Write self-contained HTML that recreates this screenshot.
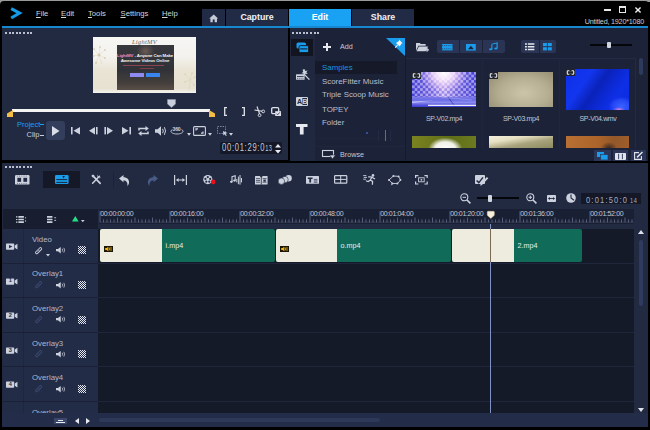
<!DOCTYPE html><html><head><meta charset="utf-8"><title>Video Editor</title><style>
*{margin:0;padding:0;box-sizing:border-box}
html,body{width:650px;height:430px;overflow:hidden;background:#000}
body{position:relative;font-family:"Liberation Sans",sans-serif;color:#c9cedb;font-size:8px}
.a{position:absolute}
.t{position:absolute;white-space:nowrap;line-height:1}
svg{position:absolute;overflow:visible}
</style></head><body><div class="a" style="left:0px;top:0px;width:650px;height:430px;background:#9a9a9a;"></div><div class="a" style="left:0px;top:1px;width:649px;height:428px;background:#000;border-radius:4px 4px 0 0"></div><div class="a" style="left:2px;top:26.2px;width:646px;height:1.6px;background:#1787cf;"></div><svg preserveAspectRatio="none" style="left:10px;top:7px" width="13" height="13" viewBox="0 0 13 13"><path d="M1.2 1.6 L9.6 6.1 L1.2 11" stroke="#159ae8" stroke-width="3" fill="none" stroke-linejoin="miter"/></svg><div class="t" style="left:36px;top:9.5px;font-size:7.7px;color:#d6d6d6;"><u>F</u>ile</div><div class="t" style="left:61px;top:9.5px;font-size:7.7px;color:#d6d6d6;"><u>E</u>dit</div><div class="t" style="left:88px;top:9.5px;font-size:7.7px;color:#d6d6d6;"><u>T</u>ools</div><div class="t" style="left:120.5px;top:9.5px;font-size:7.7px;color:#d6d6d6;"><u>S</u>ettings</div><div class="t" style="left:162px;top:9.5px;font-size:7.7px;color:#d6d6d6;"><u>H</u>elp</div><div class="a" style="left:202px;top:9px;width:23px;height:17px;background:#222b45;"></div><div class="a" style="left:226px;top:9px;width:62px;height:17px;background:#222b45;"></div><div class="a" style="left:289px;top:9px;width:62px;height:17px;background:#19a2f3;"></div><div class="a" style="left:352px;top:9px;width:62px;height:17px;background:#222b45;"></div><svg preserveAspectRatio="none" style="left:208.8px;top:13.6px" width="9.4" height="8.6" viewBox="0 0 12 11"><path d="M6 0.5 L0.3 5.6 L1.8 5.6 L1.8 10.5 L4.8 10.5 L4.8 7 L7.2 7 L7.2 10.5 L10.2 10.5 L10.2 5.6 L11.7 5.6 Z" fill="#c6cad6"/></svg><div class="t" style="left:226px;top:12.6px;font-size:8.8px;color:#f0f2f6;width:62px;text-align:center;font-weight:bold">Capture</div><div class="t" style="left:289px;top:12.6px;font-size:8.8px;color:#ffffff;width:62px;text-align:center;font-weight:bold">Edit</div><div class="t" style="left:352px;top:12.6px;font-size:8.8px;color:#f0f2f6;width:62px;text-align:center;font-weight:bold">Share</div><div class="a" style="left:604px;top:8.5px;width:6.6px;height:2px;background:#e8e8e8;"></div><div class="a" style="left:618.6px;top:6px;width:7.6px;height:7px;background:transparent;border:1px solid #e8e8e8;border-top-width:2px"></div><svg preserveAspectRatio="none" style="left:635.2px;top:6.6px" width="6" height="6" viewBox="0 0 7 7"><path d="M0.5 0.5 L6.5 6.5 M6.5 0.5 L0.5 6.5" stroke="#f0f0f0" stroke-width="1.6"/></svg><div class="t" style="left:584px;top:17.8px;font-size:7.2px;color:#d0d0d0;width:60px;text-align:right;letter-spacing:-0.2px">Untitled, 1920*1080</div><div class="a" style="left:2px;top:28px;width:286px;height:132px;background:#222a41;"></div><div class="a" style="left:5.0px;top:32px;width:2px;height:2px;background:#b9bfd0;"></div><div class="a" style="left:8.6px;top:32px;width:2px;height:2px;background:#b9bfd0;"></div><div class="a" style="left:12.2px;top:32px;width:2px;height:2px;background:#b9bfd0;"></div><div class="a" style="left:15.8px;top:32px;width:2px;height:2px;background:#b9bfd0;"></div><div class="a" style="left:19.4px;top:32px;width:2px;height:2px;background:#b9bfd0;"></div><div class="a" style="left:23.0px;top:32px;width:2px;height:2px;background:#b9bfd0;"></div><div class="a" style="left:26.6px;top:32px;width:2px;height:2px;background:#b9bfd0;"></div><div class="a" style="left:30.2px;top:32px;width:2px;height:2px;background:#b9bfd0;"></div><div class="a" style="left:93px;top:37px;width:103px;height:56px;background:#efece2;background:linear-gradient(180deg,#f6f6f4 0%,#f3f2ee 35%,#e9e4d4 60%,#e6e1d0 92%,#f4f3ef 100%)"></div><svg preserveAspectRatio="none" style="left:93px;top:46px" width="14" height="20" viewBox="0 0 14 20"><g stroke="#cdb98a" stroke-width="0.5" opacity=".45"><path d="M6 9 L1 3 M6 9 L7 1 M6 9 L12 4 M6 9 L0 10 M6 9 L12 12 M6 9 L3 17 M6 9 L9 18"/></g><g fill="#c8b07a" opacity=".5"><circle cx="1" cy="3" r="0.9"/><circle cx="7" cy="1" r="0.9"/><circle cx="12" cy="4" r="0.9"/><circle cx="0.5" cy="10" r="0.9"/><circle cx="12" cy="12" r="0.9"/><circle cx="3" cy="17" r="0.9"/><circle cx="6" cy="9" r="1.4"/></g></svg><svg preserveAspectRatio="none" style="left:184px;top:72px" width="12" height="20" viewBox="0 0 12 20"><g stroke="#cfc4a4" stroke-width="0.5" opacity=".5"><path d="M6 8 L1 2 M6 8 L8 1 M6 8 L11 5 M6 8 L1 10 M6 8 L5 19 M6 8 L10 13"/></g><g fill="#cbbd96" opacity=".5"><circle cx="1" cy="2" r="0.8"/><circle cx="8" cy="1" r="0.8"/><circle cx="11" cy="5" r="0.8"/><circle cx="1" cy="10" r="0.8"/><circle cx="10" cy="13" r="0.8"/></g></svg><div class="a" style="left:116.5px;top:45px;width:57px;height:44.5px;background:#33353b;background:radial-gradient(ellipse 9px 8px at 50% 14%,#6a5a52 0%,rgba(60,56,58,0) 100%),linear-gradient(180deg,#36383e 0%,#303238 55%,#453f3c 85%,#5a4f48 100%)"></div><div class="t" style="left:93px;top:38.5px;font-size:6.5px;color:#6d675c;width:103px;text-align:center;font-family:'Liberation Serif',serif;font-style:italic;letter-spacing:0.3px">LightMV</div><div class="t" style="left:116.5px;top:53.8px;font-size:4.4px;color:#f4f4f4;width:57px;text-align:center;font-weight:bold;letter-spacing:-0.1px"><span style="color:#e88fc9">LightMV</span> - Anyone Can Make</div><div class="t" style="left:116.5px;top:58.6px;font-size:4.4px;color:#f4f4f4;width:57px;text-align:center;font-weight:bold;letter-spacing:-0.1px">Awesome Videos Online</div><div class="a" style="left:123px;top:64.8px;width:41px;height:0.8px;background:#b04a5a;opacity:.7"></div><div class="a" style="left:139.6px;top:67.6px;width:14px;height:0.7px;background:#a04454;opacity:.7"></div><div class="a" style="left:130px;top:73.3px;width:14px;height:3.7px;background:#8d8af0;"></div><div class="a" style="left:145.5px;top:73.3px;width:14px;height:3.7px;background:#3a84f0;"></div><div class="a" style="left:12px;top:108.5px;width:198px;height:3px;background:#f4f4f4;"></div><svg preserveAspectRatio="none" style="left:7px;top:109.5px" width="6" height="7" viewBox="0 0 6 7"><path d="M6 0 L6 7 L0 7 L0 3.6 Z" fill="#f2bc45"/></svg><svg preserveAspectRatio="none" style="left:209px;top:109.5px" width="6" height="7" viewBox="0 0 6 7"><path d="M0 0 L0 7 L6 7 L6 3.6 Z" fill="#f2bc45"/></svg><svg preserveAspectRatio="none" style="left:167px;top:99px" width="9" height="9" viewBox="0 0 9 9"><path d="M0.5 0.5 H8.5 V5 L4.5 8.5 L0.5 5 Z" fill="#c9cfdd" stroke="#8e96ad" stroke-width="0.6"/></svg><svg preserveAspectRatio="none" style="left:224px;top:107px" width="3" height="9" viewBox="0 0 3 9"><path d="M3 0.6 H0.7 V8.4 H3" stroke="#e0e3ea" stroke-width="1.3" fill="none"/></svg><svg preserveAspectRatio="none" style="left:242px;top:107px" width="3" height="9" viewBox="0 0 3 9"><path d="M0 0.6 H2.3 V8.4 H0" stroke="#e0e3ea" stroke-width="1.3" fill="none"/></svg><svg preserveAspectRatio="none" style="left:254px;top:106px" width="11" height="11" viewBox="0 0 11 11"><path d="M3 0.5 L5.6 8 M0.5 4 L8.2 5.2" stroke="#dfe2ea" stroke-width="1.1" fill="none"/><circle cx="9.2" cy="5.4" r="1.4" fill="none" stroke="#dfe2ea" stroke-width="0.9"/><circle cx="5.6" cy="9.2" r="1.4" fill="none" stroke="#dfe2ea" stroke-width="0.9"/></svg><svg preserveAspectRatio="none" style="left:271px;top:107px" width="10" height="9" viewBox="0 0 10 9"><rect x="0.7" y="0.7" width="7" height="6" rx="1.2" fill="none" stroke="#dfe2ea" stroke-width="1.3"/><rect x="4.2" y="4.2" width="5.8" height="4.8" fill="#dfe2ea"/><path d="M5.4 6.6 L6.6 7.8 L8.8 5.4" stroke="#222a41" stroke-width="0.8" fill="none"/></svg><div class="t" style="left:17px;top:120.5px;font-size:7.5px;color:#1aa0f0;">Project</div><div class="a" style="left:40px;top:124px;width:4px;height:1px;background:#1aa0f0;"></div><div class="t" style="left:26.5px;top:131.3px;font-size:7.5px;color:#c9cedb;">Clip</div><div class="a" style="left:40px;top:135px;width:4px;height:1px;background:#c9cedb;"></div><div class="a" style="left:46px;top:121px;width:18.5px;height:18.5px;background:#333d5c;border-radius:3px"></div><svg preserveAspectRatio="none" style="left:52px;top:125.5px" width="7.5" height="10" viewBox="0 0 8 10"><path d="M0 0 L8 5 L0 10 Z" fill="#d9dde8"/></svg><svg preserveAspectRatio="none" style="left:71px;top:127.3px" width="9" height="7.4" viewBox="0 0 9 8"><rect x="0" y="0" width="1.6" height="8" fill="#ccd1de"/><path d="M9 0 L2.5 4 L9 8 Z" fill="#ccd1de"/></svg><svg preserveAspectRatio="none" style="left:88.5px;top:127.3px" width="9" height="7.4" viewBox="0 0 9 8"><path d="M6 0 L0 4 L6 8 Z" fill="#ccd1de"/><rect x="7" y="0" width="1.6" height="8" fill="#ccd1de"/></svg><svg preserveAspectRatio="none" style="left:104px;top:127.3px" width="9" height="7.4" viewBox="0 0 9 8"><rect x="0.4" y="0" width="1.6" height="8" fill="#ccd1de"/><path d="M3 0 L9 4 L3 8 Z" fill="#ccd1de"/></svg><svg preserveAspectRatio="none" style="left:122px;top:127.3px" width="9" height="7.4" viewBox="0 0 9 8"><path d="M0 0 L6.5 4 L0 8 Z" fill="#ccd1de"/><rect x="7.4" y="0" width="1.6" height="8" fill="#ccd1de"/></svg><svg preserveAspectRatio="none" style="left:138px;top:126px" width="11" height="10" viewBox="0 0 11 10"><path d="M1 4.5 V2.5 H8 M10 5.5 V7.5 H3" stroke="#ccd1de" stroke-width="1.5" fill="none"/><path d="M7.5 0 L10.8 2.5 L7.5 5 Z M3.5 5 L0.2 7.5 L3.5 10 Z" fill="#ccd1de"/></svg><svg preserveAspectRatio="none" style="left:154.5px;top:126px" width="12" height="10" viewBox="0 0 12 10"><path d="M0 3.2 H2.6 L6 0.3 V9.7 L2.6 6.8 H0 Z" fill="#ccd1de"/><path d="M7.6 2.8 Q9 5 7.6 7.2 M9.4 1.2 Q11.6 5 9.4 8.8" stroke="#ccd1de" stroke-width="1" fill="none"/></svg><div class="t" style="left:172.5px;top:126.5px;font-size:5.2px;color:#ccd1de;font-weight:bold;letter-spacing:-0.2px">360</div><svg preserveAspectRatio="none" style="left:170px;top:128px" width="14" height="7" viewBox="0 0 14 7"><path d="M2.4 1.6 C-0.6 3 1.4 6 7 6 C12.6 6 14.6 3 11.6 1.6" fill="none" stroke="#ccd1de" stroke-width="0.9"/></svg><svg preserveAspectRatio="none" style="left:186.5px;top:132.5px" width="4" height="2.8" viewBox="0 0 5 3"><path d="M0 0 H5 L2.5 3 Z" fill="#ccd1de"/></svg><svg preserveAspectRatio="none" style="left:193px;top:126px" width="13" height="10" viewBox="0 0 13 10"><rect x="0.6" y="0.6" width="11.8" height="8.8" rx="1" fill="none" stroke="#ccd1de" stroke-width="1.1"/><path d="M3 4.4 V2.8 H5 M10 5.6 V7.2 H8" stroke="#ccd1de" stroke-width="1.2" fill="none"/></svg><svg preserveAspectRatio="none" style="left:207.5px;top:132.5px" width="4" height="2.8" viewBox="0 0 5 3"><path d="M0 0 H5 L2.5 3 Z" fill="#ccd1de"/></svg><svg preserveAspectRatio="none" style="left:217px;top:126px" width="11" height="10" viewBox="0 0 11 10"><rect x="0.5" y="0.5" width="8" height="7" fill="none" stroke="#7781a0" stroke-width="1" stroke-dasharray="1.5 1"/><path d="M6 5 L10.5 7 L8.6 7.8 L9.8 9.6 L8.8 10 L7.8 8.2 L6.4 9.4 Z" fill="#ccd1de"/></svg><svg preserveAspectRatio="none" style="left:229px;top:132.5px" width="4" height="2.8" viewBox="0 0 5 3"><path d="M0 0 H5 L2.5 3 Z" fill="#ccd1de"/></svg><div class="a" style="left:219.5px;top:142px;width:62.5px;height:11.5px;background:#141827;border-radius:2px"></div><div class="t" style="left:221.5px;top:142.4px;font-size:11.5px;color:#c8cddb;letter-spacing:1.1px;transform:scaleX(0.66);transform-origin:0 0">00:01:29:0<span style="font-size:8.5px;letter-spacing:0.6px">13</span></div><svg preserveAspectRatio="none" style="left:275px;top:143.5px" width="6" height="10" viewBox="0 0 6 10"><path d="M0 3.6 L3 0 L6 3.6 Z M0 6 L3 9.6 L6 6 Z" fill="#e8ebf2"/></svg><div class="a" style="left:290px;top:28px;width:358px;height:133px;background:#1c2339;"></div><div class="a" style="left:290px;top:28px;width:25px;height:133px;background:#202840;"></div><div class="a" style="left:292.0px;top:32px;width:2px;height:2px;background:#b9bfd0;"></div><div class="a" style="left:295.6px;top:32px;width:2px;height:2px;background:#b9bfd0;"></div><div class="a" style="left:299.2px;top:32px;width:2px;height:2px;background:#b9bfd0;"></div><div class="a" style="left:302.8px;top:32px;width:2px;height:2px;background:#b9bfd0;"></div><div class="a" style="left:306.4px;top:32px;width:2px;height:2px;background:#b9bfd0;"></div><div class="a" style="left:310.0px;top:32px;width:2px;height:2px;background:#b9bfd0;"></div><div class="a" style="left:313.6px;top:32px;width:2px;height:2px;background:#b9bfd0;"></div><div class="a" style="left:317.2px;top:32px;width:2px;height:2px;background:#b9bfd0;"></div><div class="a" style="left:291px;top:39px;width:22px;height:17px;background:#12151f;"></div><svg preserveAspectRatio="none" style="left:295.5px;top:42px" width="13" height="11" viewBox="0 0 13 11"><rect x="0.5" y="0.5" width="9.5" height="6" rx="1.6" fill="#1a9cec"/><rect x="3" y="3.6" width="9.6" height="7" rx="1.4" fill="#1a9cec" stroke="#12151f" stroke-width="0.9"/><rect x="4.2" y="6.4" width="7.2" height="1" fill="#12151f"/></svg><svg preserveAspectRatio="none" style="left:295.5px;top:69px" width="14" height="11" viewBox="0 0 14 11"><rect x="0" y="5.2" width="8.6" height="5.6" rx="0.6" fill="#ccd1de"/><path d="M1 7.6 H7.6" stroke="#202840" stroke-width="0.9"/><path d="M1 9.6 H7.6" stroke="#202840" stroke-width="0.6" stroke-dasharray="1 0.8"/><path d="M7.6 4.6 L13.4 10.6" stroke="#ccd1de" stroke-width="1.3"/><path d="M8.4 0 L9.3 2 L11.6 1.4 L10.3 3.3 L11.8 5 L9.5 4.8 L8.4 6.8 L7.6 4.6 L5.4 4.2 L7.2 3 L6.6 0.8 Z" fill="#ccd1de"/></svg><svg preserveAspectRatio="none" style="left:296px;top:97px" width="12" height="9" viewBox="0 0 12 9"><rect x="0" y="0" width="12" height="9" rx="1" fill="#ccd1de"/><rect x="6.4" y="1" width="4.6" height="7" fill="#202840"/></svg><div class="t" style="left:297px;top:98px;font-size:7px;color:#202840;font-weight:bold">A</div><div class="t" style="left:302.4px;top:98px;font-size:7px;color:#ccd1de;font-weight:bold">B</div><svg preserveAspectRatio="none" style="left:296px;top:124px" width="11.5" height="10.5" viewBox="0 0 11.5 10.5"><path d="M0 0 H11.5 V3 H7.6 V10.5 H3.9 V3 H0 Z" fill="#e6e9f0"/></svg><svg preserveAspectRatio="none" style="left:323px;top:43px" width="8" height="8" viewBox="0 0 8 8"><path d="M3 0 H5 V3 H8 V5 H5 V8 H3 V5 H0 V3 H3 Z" fill="#e6e9f0"/></svg><div class="t" style="left:340px;top:43.3px;font-size:7.2px;color:#c3c8d6;">Add</div><svg preserveAspectRatio="none" style="left:386px;top:38px" width="19" height="18" viewBox="0 0 19 18"><path d="M0 0 H19 V18 Z" fill="#1a9cec"/><path d="M13 1.6 L16.6 5.2 L15.6 5.6 L13.6 8.6 L10 5 L13 3 Z" fill="#f2f6fb"/><path d="M11.6 7 L9.2 9.6" stroke="#f2f6fb" stroke-width="1.1"/></svg><div class="a" style="left:315px;top:61px;width:82px;height:13px;background:#151928;"></div><div class="t" style="left:322px;top:63.8px;font-size:7.9px;color:#1b93df;">Samples</div><div class="t" style="left:322px;top:77.8px;font-size:7.9px;color:#b9bfd0;">ScoreFitter Music</div><div class="t" style="left:322px;top:91.2px;font-size:7.9px;color:#b9bfd0;">Triple Scoop Music</div><div class="t" style="left:322px;top:105.8px;font-size:7.9px;color:#b9bfd0;">TOPEY</div><div class="t" style="left:322px;top:119.2px;font-size:7.9px;color:#b9bfd0;">Folder</div><div class="a" style="left:315px;top:138px;width:70px;height:1px;background:#1f263c;"></div><div class="a" style="left:315px;top:146px;width:90px;height:1px;background:#20273d;"></div><div class="a" style="left:366px;top:132px;width:2px;height:2px;background:#34508f;"></div><div class="a" style="left:378px;top:130px;width:1px;height:11px;background:#222a45;"></div><div class="a" style="left:385px;top:130px;width:1px;height:11px;background:#77752a;"></div><div class="a" style="left:390px;top:130px;width:1px;height:11px;background:#222a45;"></div><svg preserveAspectRatio="none" style="left:322px;top:150px" width="14" height="9" viewBox="0 0 14 9"><rect x="0.5" y="0.5" width="11" height="6" fill="none" stroke="#ccd1de" stroke-width="1.1"/><path d="M7.5 5 H13.5 L10.5 9 Z" fill="#ccd1de" stroke="#1c2339" stroke-width="0.6"/></svg><div class="t" style="left:340px;top:150.6px;font-size:7.2px;color:#c3c8d6;">Browse</div><div class="a" style="left:405px;top:38px;width:1px;height:123px;background:#161b2c;"></div><svg preserveAspectRatio="none" style="left:415.5px;top:41.8px" width="13.5" height="10.2" viewBox="0 0 14 11"><path d="M0 1 H4 L5 2.2 H10 V4 H2.5 L0 9.5 Z" fill="#ccd1de"/><path d="M3 4.8 H12.5 L10 10 H0.5 Z" fill="#ccd1de"/><path d="M11.5 6.5 V10.5 M9.5 8.5 H13.5" stroke="#ccd1de" stroke-width="1.2"/></svg><div class="a" style="left:436.5px;top:40.2px;width:68px;height:12.8px;background:#2a3454;border-radius:2px"></div><div class="a" style="left:458.5px;top:40.2px;width:1px;height:12.8px;background:#1c2339;"></div><div class="a" style="left:481.5px;top:40.2px;width:1px;height:12.8px;background:#1c2339;"></div><svg preserveAspectRatio="none" style="left:442px;top:43.8px" width="10.5" height="6.4" viewBox="0 0 11 8"><rect x="0" y="0" width="11" height="8" fill="#1a9cec"/><path d="M0 2 H11 M0 6 H11" stroke="#2a3557" stroke-width="0.8" stroke-dasharray="1.2 1"/></svg><svg preserveAspectRatio="none" style="left:466px;top:43.5px" width="9.8" height="6.6" viewBox="0 0 10 8"><rect x="0" y="0" width="10" height="8" fill="#1a9cec"/><path d="M2 6.5 L5 2 L8 6.5 Z" fill="#1c2339"/></svg><svg preserveAspectRatio="none" style="left:489px;top:43px" width="8.6" height="7.6" viewBox="0 0 9 10"><path d="M3 1.5 L8.5 0 V7" stroke="#1a9cec" stroke-width="1.3" fill="none"/><path d="M3 1.5 V8" stroke="#1a9cec" stroke-width="1.2"/><ellipse cx="1.8" cy="8.2" rx="1.8" ry="1.4" fill="#1a9cec"/><ellipse cx="7.2" cy="7.2" rx="1.8" ry="1.4" fill="#1a9cec"/></svg><div class="a" style="left:521px;top:40.2px;width:35px;height:12.8px;background:#2a3454;border-radius:2px"></div><div class="a" style="left:538.5px;top:40.2px;width:1px;height:12.8px;background:#1c2339;"></div><svg preserveAspectRatio="none" style="left:525px;top:43.2px" width="9.4" height="7.4" viewBox="0 0 10 8"><path d="M0 1 H2 M3 1 H10 M0 4 H2 M3 4 H10 M0 7 H2 M3 7 H10" stroke="#e6e9f0" stroke-width="1.6"/></svg><svg preserveAspectRatio="none" style="left:543px;top:43.2px" width="8.8" height="7.4" viewBox="0 0 9 8"><rect x="0" y="0" width="4" height="3.4" fill="#1a9cec"/><rect x="5" y="0" width="4" height="3.4" fill="#1a9cec"/><rect x="0" y="4.6" width="4" height="3.4" fill="#1a9cec"/><rect x="5" y="4.6" width="4" height="3.4" fill="#1a9cec"/></svg><div class="a" style="left:590px;top:44.3px;width:42px;height:1.6px;background:#05060a;"></div><div class="a" style="left:607px;top:42px;width:4px;height:6px;background:#d0d4df;border-radius:1px"></div><div class="a" style="left:406px;top:58px;width:230px;height:1px;background:#232b45;"></div><div class="a" style="left:482px;top:60px;width:1px;height:88px;background:#1f263d;"></div><div class="a" style="left:558.5px;top:60px;width:1px;height:88px;background:#1f263d;"></div><div class="a" style="left:635px;top:58px;width:1px;height:90px;background:#222a44;"></div><div class="a" style="left:639px;top:58px;width:4px;height:17px;background:#2e3a5c;border-radius:2px"></div><div class="a" style="left:412.3px;top:71.5px;width:64px;height:35px;background:#5a55d8;background:radial-gradient(ellipse 24px 19px at 50% 4%,rgba(255,255,255,.98) 0%,rgba(255,235,252,.8) 40%,rgba(255,220,250,.35) 70%,rgba(255,255,255,0) 100%),repeating-conic-gradient(rgba(255,255,255,.42) 0% 25%,rgba(50,40,200,.25) 0% 50%) 0 0/5.4px 5.4px,linear-gradient(90deg,#4a46d8,#8674e6 30%,#c8b0f4 50%,#8674e6 70%,#4a46d8)"></div><div class="a" style="left:412.3px;top:97px;width:64px;height:9.5px;background:#6c6ce6;background:linear-gradient(180deg,#7c7ae8 0%,#6a6ae6 30%,#8a8aee 55%,#5656de 80%,#3a3cd0 100%)"></div><svg preserveAspectRatio="none" style="left:412.3px;top:97px" width="64" height="9.5" viewBox="0 0 64 9.5"><path d="M0 4.4 L22 3.4 L0 6 Z" fill="#d8d8fa" opacity=".7"/><path d="M36 0 L43 9.5" stroke="#2a2ca0" stroke-width="0.8" opacity=".8"/><path d="M16 8.4 H64" stroke="#f4f4ff" stroke-width="1.2" opacity=".95"/><path d="M30 0.4 L60 3" stroke="#b0b0f4" stroke-width="0.8" opacity=".6"/></svg><div class="a" style="left:489px;top:71.5px;width:64px;height:35px;background:#b5ad90;background:radial-gradient(ellipse 44px 28px at 55% 60%,#cdc5a8 0%,#b6ae92 55%,#978f74 100%)"></div><div class="a" style="left:566px;top:68.8px;width:63px;height:41.2px;background:#0c2ce6;background:radial-gradient(ellipse 6px 2.5px at 84% 99%,#d07ae6 0%,rgba(208,122,230,0) 100%),radial-gradient(ellipse 13px 10px at 88% 92%,#3a62ff 0%,#2648f6 65%,rgba(38,72,246,0) 100%),linear-gradient(125deg,#0d2ee8 0%,#1236ee 30%,#0a22b8 48%,#0b27cc 58%,#0e2fe6 75%,#0c2ce0 100%)"></div><svg preserveAspectRatio="none" style="left:412.3px;top:71.5px" width="9" height="7" viewBox="0 0 9 7"><rect x="0" y="0" width="9" height="7" fill="#20232c"/><rect x="1.3" y="1.7" width="6.4" height="3.6" rx="0.6" fill="none" stroke="#e8eaf0" stroke-width="1.1"/><rect x="3.4" y="0.8" width="2.2" height="1.6" fill="#20232c"/><rect x="3.4" y="4.6" width="2.2" height="1.6" fill="#20232c"/></svg><svg preserveAspectRatio="none" style="left:489px;top:71.5px" width="9" height="7" viewBox="0 0 9 7"><rect x="0" y="0" width="9" height="7" fill="#20232c"/><rect x="1.3" y="1.7" width="6.4" height="3.6" rx="0.6" fill="none" stroke="#e8eaf0" stroke-width="1.1"/><rect x="3.4" y="0.8" width="2.2" height="1.6" fill="#20232c"/><rect x="3.4" y="4.6" width="2.2" height="1.6" fill="#20232c"/></svg><svg preserveAspectRatio="none" style="left:566px;top:68.8px" width="9" height="7" viewBox="0 0 9 7"><rect x="0" y="0" width="9" height="7" fill="#20232c"/><rect x="1.3" y="1.7" width="6.4" height="3.6" rx="0.6" fill="none" stroke="#e8eaf0" stroke-width="1.1"/><rect x="3.4" y="0.8" width="2.2" height="1.6" fill="#20232c"/><rect x="3.4" y="4.6" width="2.2" height="1.6" fill="#20232c"/></svg><div class="t" style="left:412px;top:115px;font-size:7px;color:#c0c5d2;width:64px;text-align:center;letter-spacing:-0.35px">SP-V02.mp4</div><div class="t" style="left:489px;top:115px;font-size:7px;color:#c0c5d2;width:64px;text-align:center;letter-spacing:-0.35px">SP-V03.mp4</div><div class="t" style="left:566px;top:115px;font-size:7px;color:#c0c5d2;width:64px;text-align:center;letter-spacing:-0.35px">SP-V04.wmv</div><div class="a" style="left:412px;top:136.3px;width:64px;height:11.5px;background:#6e7a1e;background:radial-gradient(ellipse 17px 11px at 52% 105%,#fff 0%,#f0f0e6 60%,rgba(110,122,30,0) 100%),linear-gradient(90deg,#7b8220,#5f6e18 60%,#6d7a20)"></div><div class="a" style="left:489px;top:136.3px;width:64px;height:11.5px;background:#b5ad90;background:linear-gradient(170deg,#f4f1df 0%,#e6e0c2 30%,#a8a37c 60%,#8d8a60 100%)"></div><div class="a" style="left:566px;top:136.3px;width:63px;height:11.5px;background:#a0602c;background:radial-gradient(ellipse 8px 6px at 68% 100%,#3a2a20 0%,rgba(80,50,30,.5) 60%,rgba(160,96,44,0) 100%),linear-gradient(100deg,#b87034 0%,#ac642a 50%,#94582a 75%,#a05e2a 100%)"></div><div class="a" style="left:594px;top:150px;width:17px;height:11px;background:#2a3557;"></div><div class="a" style="left:613px;top:150px;width:15px;height:11px;background:#2a3557;"></div><div class="a" style="left:631px;top:150px;width:15px;height:11px;background:#2a3557;"></div><svg preserveAspectRatio="none" style="left:597px;top:152px" width="11" height="8" viewBox="0 0 11 8"><rect x="0" y="0" width="7" height="5" fill="#1a9cec"/><rect x="3.5" y="2.5" width="7.5" height="5.5" fill="#1a9cec" stroke="#2a3557" stroke-width="0.7"/></svg><svg preserveAspectRatio="none" style="left:615px;top:152.5px" width="11" height="7" viewBox="0 0 11 7"><rect x="0" y="0" width="11" height="7" rx="0.8" fill="#e1e4ec"/><path d="M3.6 0.8 V6.2 M7.4 0.8 V6.2" stroke="#2a3557" stroke-width="0.9"/></svg><svg preserveAspectRatio="none" style="left:634px;top:152px" width="9" height="8" viewBox="0 0 9 8"><path d="M5 0.6 H0.6 V7.4 H7.4 V4" stroke="#e1e4ec" stroke-width="1.1" fill="none"/><path d="M3 5.4 L8.5 0" stroke="#e1e4ec" stroke-width="1.5"/></svg><div class="a" style="left:2px;top:163px;width:646px;height:264px;background:#222a42;"></div><div class="a" style="left:5.0px;top:166px;width:2px;height:2px;background:#b9bfd0;"></div><div class="a" style="left:8.6px;top:166px;width:2px;height:2px;background:#b9bfd0;"></div><div class="a" style="left:12.2px;top:166px;width:2px;height:2px;background:#b9bfd0;"></div><div class="a" style="left:15.8px;top:166px;width:2px;height:2px;background:#b9bfd0;"></div><div class="a" style="left:19.4px;top:166px;width:2px;height:2px;background:#b9bfd0;"></div><div class="a" style="left:23.0px;top:166px;width:2px;height:2px;background:#b9bfd0;"></div><div class="a" style="left:26.6px;top:166px;width:2px;height:2px;background:#b9bfd0;"></div><div class="a" style="left:30.2px;top:166px;width:2px;height:2px;background:#b9bfd0;"></div><div class="a" style="left:43px;top:171px;width:37px;height:17px;background:#141827;"></div><svg preserveAspectRatio="none" style="left:15px;top:175px" width="14.5" height="9.6" viewBox="0 0 14.5 9.6"><rect x="0" y="0" width="14.5" height="9.6" rx="1.2" fill="#ccd1de"/><rect x="2.4" y="2.8" width="3.7" height="4" fill="#222a42"/><rect x="8.4" y="2.8" width="3.7" height="4" fill="#222a42"/><path d="M2 1.1 H13 M2 8.5 H13" stroke="#222a42" stroke-width="0.7" stroke-dasharray="0.8 1.4" opacity=".8"/></svg><svg preserveAspectRatio="none" style="left:54.8px;top:175px" width="13.6" height="9" viewBox="0 0 13.6 9"><rect x="0" y="0" width="13.6" height="9" rx="1.2" fill="#1a9cec"/><path d="M1.4 4.6 H12.2 M1.4 7.4 H12.2" stroke="#141827" stroke-width="0.9"/><path d="M7.4 1 H9.8 L8.6 3.6 Z" fill="#141827"/></svg><svg preserveAspectRatio="none" style="left:90.5px;top:174px" width="10.5" height="10.5" viewBox="0 0 10.5 10.5"><path d="M2.4 2.4 L9.2 9.4" stroke="#ccd1de" stroke-width="1.7" stroke-linecap="round"/><path d="M8.4 2.2 L1.6 9.2" stroke="#ccd1de" stroke-width="1.5" stroke-linecap="round"/><path d="M0.4 1.8 L1.8 0.4 L3.6 1.4 L1.4 3.6 Z" fill="#ccd1de"/><path d="M7 0.6 A2 2 0 1 0 10 3.4 L8.4 3.6 L7 2.2 Z" fill="#ccd1de"/></svg><div class="a" style="left:112.5px;top:172px;width:1px;height:16px;background:#1b2238;"></div><svg preserveAspectRatio="none" style="left:119px;top:175px" width="11" height="11" viewBox="0 0 11 11"><path d="M0 3.5 L4.5 0 V2.2 C8 2.2 10.5 4.5 10 8 C9.8 9.4 9 10.4 8.3 10.9 C9 8 7.5 5.4 4.5 5.2 V7.2 Z" fill="#ccd1de"/></svg><svg preserveAspectRatio="none" style="left:147px;top:175px" width="11" height="11" viewBox="0 0 11 11"><path d="M11 3.5 L6.5 0 V2.2 C3 2.2 0.5 4.5 1 8 C1.2 9.4 2 10.4 2.7 10.9 C2 8 3.5 5.4 6.5 5.2 V7.2 Z" fill="#4a5b85"/></svg><svg preserveAspectRatio="none" style="left:174px;top:175px" width="13" height="10" viewBox="0 0 13 10"><path d="M0.6 0 V10 M12.4 0 V10" stroke="#ccd1de" stroke-width="1.2"/><path d="M2.5 5 H10.5" stroke="#ccd1de" stroke-width="1"/><path d="M4.6 3 L2.2 5 L4.6 7 Z M8.4 3 L10.8 5 L8.4 7 Z" fill="#ccd1de"/></svg><svg preserveAspectRatio="none" style="left:203px;top:175px" width="13" height="10" viewBox="0 0 13 10"><circle cx="4.8" cy="4.6" r="4.6" fill="#ccd1de"/><circle cx="4.8" cy="2.1" r="1.1" fill="#222a42"/><circle cx="2.4" cy="3.9" r="1.1" fill="#222a42"/><circle cx="7.2" cy="3.9" r="1.1" fill="#222a42"/><circle cx="3.3" cy="6.7" r="1.1" fill="#222a42"/><circle cx="6.3" cy="6.7" r="1.1" fill="#222a42"/><circle cx="10.2" cy="6.9" r="2.3" fill="#e8101c"/></svg><svg preserveAspectRatio="none" style="left:230px;top:175px" width="12" height="9.6" viewBox="0 0 12 9.6"><path d="M2 6.6 V1.6 L5.2 0.8 V5.4" stroke="#ccd1de" stroke-width="1.1" fill="none"/><ellipse cx="1.4" cy="6.8" rx="1.4" ry="1.1" fill="#ccd1de"/><ellipse cx="4.5" cy="5.6" rx="1.4" ry="1.1" fill="#ccd1de"/><path d="M6.8 4 V7.4 M8.4 1.6 V9.2 M10 0 V9.6 M11.5 3 V7.4" stroke="#ccd1de" stroke-width="1"/></svg><svg preserveAspectRatio="none" style="left:255px;top:175.6px" width="12.6" height="8.6" viewBox="0 0 12.6 8.6"><rect x="0" y="0" width="12.6" height="8.6" rx="0.6" fill="#ccd1de"/><path d="M6.3 0 V8.6" stroke="#222a42" stroke-width="0.8"/><path d="M1 2.6 H5 M1 4.4 H5 M1 6.2 H5 M7.6 2.6 H11.6 M7.6 6.2 H11.6" stroke="#222a42" stroke-width="0.7"/><rect x="8.4" y="3.6" width="2.4" height="2" fill="#222a42"/><path d="M4.8 0 H7.8 L6.3 1.8 Z" fill="#222a42"/></svg><svg preserveAspectRatio="none" style="left:278px;top:175px" width="14" height="9.6" viewBox="0 0 14 9.6"><circle cx="10.6" cy="3.3" r="3.2" fill="#ccd1de"/><circle cx="7" cy="4.6" r="3.2" fill="#ccd1de" stroke="#222a42" stroke-width="0.6"/><circle cx="3.4" cy="6.2" r="3.2" fill="#ccd1de" stroke="#222a42" stroke-width="0.6"/></svg><svg preserveAspectRatio="none" style="left:305.6px;top:176px" width="13" height="7.8" viewBox="0 0 13 7.8"><rect x="0" y="0" width="13" height="7.8" rx="0.6" fill="#ccd1de"/><path d="M1.8 1.4 H6.6 V2.9 H5.1 V6.6 H3.3 V2.9 H1.8 Z" fill="#222a42"/><path d="M7.8 3.4 H11.4 M7.8 4.9 H11.4 M7.8 6.3 H11.4" stroke="#222a42" stroke-width="0.7"/></svg><svg preserveAspectRatio="none" style="left:334px;top:175.4px" width="13.4" height="8.8" viewBox="0 0 13.4 8.8"><rect x="0.6" y="0.6" width="12.2" height="7.6" rx="0.8" fill="none" stroke="#ccd1de" stroke-width="1.2"/><path d="M6.7 0.6 V8.2 M0.6 4.4 H12.8" stroke="#ccd1de" stroke-width="1"/></svg><svg preserveAspectRatio="none" style="left:363.4px;top:174.4px" width="13" height="10.6" viewBox="0 0 13 10.6"><circle cx="10" cy="1.4" r="1.3" fill="#ccd1de"/><path d="M5.6 2.8 L8.8 3 L7.4 6 L9.6 7.4 L9.4 10.2 M7.4 6 L5.2 7.6 L3.4 7 M8.8 3.2 L11.6 4.8" stroke="#ccd1de" stroke-width="1.25" fill="none" stroke-linecap="round"/><path d="M0.2 1.6 H3.4 M0.8 3.4 H4 M0.2 5.2 H3" stroke="#ccd1de" stroke-width="0.9"/></svg><svg preserveAspectRatio="none" style="left:388px;top:175px" width="13.4" height="10.4" viewBox="0 0 13.4 10.4"><path d="M5.4 1 L10.6 1.4 L12.6 5 L9.4 8.6 L4.4 8.4 L1 5 Z" fill="none" stroke="#ccd1de" stroke-width="0.9"/><circle cx="5.4" cy="1" r="1" fill="#ccd1de"/><circle cx="10.6" cy="1.4" r="1" fill="#ccd1de"/><circle cx="12.4" cy="5" r="1" fill="#ccd1de"/><circle cx="9.4" cy="8.6" r="1" fill="#ccd1de"/><circle cx="4.4" cy="8.4" r="1" fill="#ccd1de"/><circle cx="1" cy="5" r="1" fill="#ccd1de"/><path d="M4.4 8.4 L3.4 10.2" stroke="#ccd1de" stroke-width="0.9"/></svg><svg preserveAspectRatio="none" style="left:415.4px;top:174.6px" width="12.8" height="9.6" viewBox="0 0 12.8 9.6"><path d="M0.6 3 V0.6 H3.4 M9.4 0.6 H12.2 V3 M12.2 6.6 V9 H9.4 M3.4 9 H0.6 V6.6" stroke="#ccd1de" stroke-width="1.2" fill="none"/><rect x="3.6" y="2.8" width="5.6" height="4" fill="none" stroke="#ccd1de" stroke-width="0.9"/><circle cx="6.4" cy="4.8" r="0.9" fill="#ccd1de"/></svg><svg preserveAspectRatio="none" style="left:475px;top:174px" width="14" height="12" viewBox="0 0 14 12"><rect x="0" y="1" width="10" height="9" rx="0.8" fill="#ccd1de"/><path d="M1.6 6.4 L3.8 8.6 L8 3.4" stroke="#222a42" stroke-width="1.4" fill="none"/><path d="M6 10.6 L12.6 3.6" stroke="#ccd1de" stroke-width="2"/><path d="M5.2 11.8 L5.8 9.8 L7 11 Z" fill="#ccd1de"/></svg><svg preserveAspectRatio="none" style="left:460px;top:193px" width="11" height="11" viewBox="0 0 11 11"><circle cx="4.3" cy="4.3" r="3.5" fill="none" stroke="#ccd1de" stroke-width="1.1"/><path d="M7 7 L10.4 10.4" stroke="#ccd1de" stroke-width="1.6"/><path d="M2.6 4.3 H6" stroke="#ccd1de" stroke-width="1"/></svg><div class="a" style="left:477px;top:197.3px;width:42px;height:1.6px;background:#05060a;"></div><div class="a" style="left:488px;top:194.5px;width:4px;height:7px;background:#d0d4df;border-radius:1px"></div><svg preserveAspectRatio="none" style="left:526px;top:193px" width="11" height="11" viewBox="0 0 11 11"><circle cx="4.3" cy="4.3" r="3.5" fill="none" stroke="#ccd1de" stroke-width="1.1"/><path d="M7 7 L10.4 10.4" stroke="#ccd1de" stroke-width="1.6"/><path d="M2.6 4.3 H6 M4.3 2.6 V6" stroke="#ccd1de" stroke-width="1"/></svg><svg preserveAspectRatio="none" style="left:547px;top:195px" width="9" height="7" viewBox="0 0 9 7"><rect x="0" y="0" width="9" height="7" rx="0.8" fill="#ccd1de"/><path d="M1.4 3.5 H7.6" stroke="#222a42" stroke-width="0.9"/><path d="M3 2 L1.2 3.5 L3 5 Z M6 2 L7.8 3.5 L6 5 Z" fill="#222a42"/></svg><svg preserveAspectRatio="none" style="left:566px;top:193px" width="10" height="10" viewBox="0 0 10 10"><circle cx="5" cy="5" r="4.8" fill="#ccd1de"/><path d="M5 1.4 V5 L8 7.2" stroke="#222a42" stroke-width="1.1" fill="none"/></svg><div class="a" style="left:581px;top:193px;width:60px;height:11px;background:#141827;"></div><div class="t" style="left:586px;top:194.6px;font-size:9.4px;color:#a6aec4;letter-spacing:1.5px;transform:scaleX(0.8);transform-origin:0 0">0:01:50:0<span style="font-size:7px;letter-spacing:0.6px"> 14</span></div><div class="a" style="left:3px;top:208.6px;width:95px;height:20.4px;background:#181d2f;"></div><div class="a" style="left:99px;top:208.6px;width:536px;height:15.8px;background:#1a2034;"></div><svg preserveAspectRatio="none" style="left:16.4px;top:215.6px" width="11" height="7" viewBox="0 0 12 8"><path d="M0 1 H1.6 M0 4 H1.6 M0 7 H1.6" stroke="#ccd1de" stroke-width="1.4"/><path d="M2.6 1 H8.6 M2.6 4 H8.6 M2.6 7 H8.6" stroke="#ccd1de" stroke-width="1.8"/><path d="M10.4 2 V2.1 M10.4 5.6 V5.7" stroke="#ccd1de" stroke-width="1.4" stroke-linecap="round"/></svg><svg preserveAspectRatio="none" style="left:47px;top:215.6px" width="10" height="7" viewBox="0 0 11 8"><path d="M0 1 H6 M0 4 H6 M0 7 H6" stroke="#ccd1de" stroke-width="1.8"/><path d="M8 2 H10 M8 5 H10" stroke="#ccd1de" stroke-width="1"/></svg><svg preserveAspectRatio="none" style="left:72px;top:216.2px" width="6.6" height="5.6" viewBox="0 0 7 6"><path d="M3.5 0 L7 6 H0 Z" fill="#22e08a"/></svg><svg preserveAspectRatio="none" style="left:80.5px;top:219.6px" width="3.6" height="2.6" viewBox="0 0 4 3"><path d="M0 0 H4 L2 2.6 Z" fill="#ccd1de"/></svg><svg preserveAspectRatio="none" style="left:99px;top:209px" width="536" height="14" viewBox="0 0 536 14"><path d="M1 13.2 H536" stroke="#66708e" stroke-width="0.6" opacity=".55"/><path d="M1.0 2 V13.4 M4.5 10.4 V13.4 M8.0 10.4 V13.4 M11.5 10.4 V13.4 M15.0 10.4 V13.4 M18.5 8.6 V13.4 M22.0 10.4 V13.4 M25.5 10.4 V13.4 M29.0 10.4 V13.4 M32.5 10.4 V13.4 M36.0 8.6 V13.4 M39.5 10.4 V13.4 M43.0 10.4 V13.4 M46.5 10.4 V13.4 M50.0 10.4 V13.4 M53.5 8.6 V13.4 M57.0 10.4 V13.4 M60.5 10.4 V13.4 M64.0 10.4 V13.4 M67.5 10.4 V13.4 M71.0 2 V13.4 M74.5 10.4 V13.4 M78.0 10.4 V13.4 M81.5 10.4 V13.4 M85.0 10.4 V13.4 M88.5 8.6 V13.4 M92.0 10.4 V13.4 M95.5 10.4 V13.4 M99.0 10.4 V13.4 M102.5 10.4 V13.4 M106.0 8.6 V13.4 M109.5 10.4 V13.4 M113.0 10.4 V13.4 M116.5 10.4 V13.4 M120.0 10.4 V13.4 M123.5 8.6 V13.4 M127.0 10.4 V13.4 M130.5 10.4 V13.4 M134.0 10.4 V13.4 M137.5 10.4 V13.4 M141.0 2 V13.4 M144.5 10.4 V13.4 M148.0 10.4 V13.4 M151.5 10.4 V13.4 M155.0 10.4 V13.4 M158.5 8.6 V13.4 M162.0 10.4 V13.4 M165.5 10.4 V13.4 M169.0 10.4 V13.4 M172.5 10.4 V13.4 M176.0 8.6 V13.4 M179.5 10.4 V13.4 M183.0 10.4 V13.4 M186.5 10.4 V13.4 M190.0 10.4 V13.4 M193.5 8.6 V13.4 M197.0 10.4 V13.4 M200.5 10.4 V13.4 M204.0 10.4 V13.4 M207.5 10.4 V13.4 M211.0 2 V13.4 M214.5 10.4 V13.4 M218.0 10.4 V13.4 M221.5 10.4 V13.4 M225.0 10.4 V13.4 M228.5 8.6 V13.4 M232.0 10.4 V13.4 M235.5 10.4 V13.4 M239.0 10.4 V13.4 M242.5 10.4 V13.4 M246.0 8.6 V13.4 M249.5 10.4 V13.4 M253.0 10.4 V13.4 M256.5 10.4 V13.4 M260.0 10.4 V13.4 M263.5 8.6 V13.4 M267.0 10.4 V13.4 M270.5 10.4 V13.4 M274.0 10.4 V13.4 M277.5 10.4 V13.4 M281.0 2 V13.4 M284.5 10.4 V13.4 M288.0 10.4 V13.4 M291.5 10.4 V13.4 M295.0 10.4 V13.4 M298.5 8.6 V13.4 M302.0 10.4 V13.4 M305.5 10.4 V13.4 M309.0 10.4 V13.4 M312.5 10.4 V13.4 M316.0 8.6 V13.4 M319.5 10.4 V13.4 M323.0 10.4 V13.4 M326.5 10.4 V13.4 M330.0 10.4 V13.4 M333.5 8.6 V13.4 M337.0 10.4 V13.4 M340.5 10.4 V13.4 M344.0 10.4 V13.4 M347.5 10.4 V13.4 M351.0 2 V13.4 M354.5 10.4 V13.4 M358.0 10.4 V13.4 M361.5 10.4 V13.4 M365.0 10.4 V13.4 M368.5 8.6 V13.4 M372.0 10.4 V13.4 M375.5 10.4 V13.4 M379.0 10.4 V13.4 M382.5 10.4 V13.4 M386.0 8.6 V13.4 M389.5 10.4 V13.4 M393.0 10.4 V13.4 M396.5 10.4 V13.4 M400.0 10.4 V13.4 M403.5 8.6 V13.4 M407.0 10.4 V13.4 M410.5 10.4 V13.4 M414.0 10.4 V13.4 M417.5 10.4 V13.4 M421.0 2 V13.4 M424.5 10.4 V13.4 M428.0 10.4 V13.4 M431.5 10.4 V13.4 M435.0 10.4 V13.4 M438.5 8.6 V13.4 M442.0 10.4 V13.4 M445.5 10.4 V13.4 M449.0 10.4 V13.4 M452.5 10.4 V13.4 M456.0 8.6 V13.4 M459.5 10.4 V13.4 M463.0 10.4 V13.4 M466.5 10.4 V13.4 M470.0 10.4 V13.4 M473.5 8.6 V13.4 M477.0 10.4 V13.4 M480.5 10.4 V13.4 M484.0 10.4 V13.4 M487.5 10.4 V13.4 M491.0 2 V13.4 M494.5 10.4 V13.4 M498.0 10.4 V13.4 M501.5 10.4 V13.4 M505.0 10.4 V13.4 M508.5 8.6 V13.4 M512.0 10.4 V13.4 M515.5 10.4 V13.4 M519.0 10.4 V13.4 M522.5 10.4 V13.4 M526.0 8.6 V13.4 M529.5 10.4 V13.4 M533.0 10.4 V13.4" stroke="#66708e" stroke-width="0.8"/></svg><div class="t" style="left:100.2px;top:210.3px;font-size:7px;color:#c4c9d8;letter-spacing:-0.35px">00:00:00:00</div><div class="t" style="left:170.2px;top:210.3px;font-size:7px;color:#c4c9d8;letter-spacing:-0.35px">00:00:16:00</div><div class="t" style="left:240.2px;top:210.3px;font-size:7px;color:#c4c9d8;letter-spacing:-0.35px">00:00:32:00</div><div class="t" style="left:310.2px;top:210.3px;font-size:7px;color:#c4c9d8;letter-spacing:-0.35px">00:00:48:00</div><div class="t" style="left:380.2px;top:210.3px;font-size:7px;color:#c4c9d8;letter-spacing:-0.35px">00:01:04:00</div><div class="t" style="left:450.2px;top:210.3px;font-size:7px;color:#c4c9d8;letter-spacing:-0.35px">00:01:20:00</div><div class="t" style="left:520.2px;top:210.3px;font-size:7px;color:#c4c9d8;letter-spacing:-0.35px">00:01:36:00</div><div class="t" style="left:590.2px;top:210.3px;font-size:7px;color:#c4c9d8;letter-spacing:-0.35px">00:01:52:00</div><div class="a" style="left:3px;top:229.0px;width:95px;height:33.6px;background:#232c47;"></div><div class="a" style="left:23px;top:229.0px;width:1px;height:33.6px;background:#1d2540;"></div><div class="a" style="left:98px;top:229.0px;width:536px;height:33.6px;background:#151a28;"></div><div class="a" style="left:3px;top:262.6px;width:95px;height:1px;background:#1a2036;"></div><div class="a" style="left:98px;top:262.6px;width:536px;height:1px;background:#1f263b;"></div><svg preserveAspectRatio="none" style="left:6.4px;top:243.0px" width="11.8" height="7.2" viewBox="0 0 13 9"><rect x="0" y="0.6" width="9" height="7.8" rx="0.8" fill="#ccd1de"/><path d="M9.6 3 L12.6 0.8 V8.2 L9.6 6 Z" fill="#ccd1de"/></svg><svg preserveAspectRatio="none" style="left:9.2px;top:245.0px" width="3.4" height="3.2" viewBox="0 0 4 4"><path d="M0 0 L4 2 L0 4 Z" fill="#232c47"/></svg><svg preserveAspectRatio="none" style="left:35.2px;top:246.6px" width="7.6" height="7.6" viewBox="0 0 8 8"><path d="M1.8 5.9 L5.8 1.9" stroke="#ccd1de" stroke-width="3.4" stroke-linecap="round"/><path d="M1.8 5.9 L5.8 1.9" stroke="#232c47" stroke-width="1.5" stroke-linecap="round"/><path d="M2.8 4.9 L4.8 2.9" stroke="#ccd1de" stroke-width="0.8"/></svg><svg preserveAspectRatio="none" style="left:46px;top:253.5px" width="4" height="3" viewBox="0 0 4 3"><path d="M0 0 H4 L2 2.6 Z" fill="#ccd1de"/></svg><svg preserveAspectRatio="none" style="left:56px;top:247.2px" width="10" height="6.4" viewBox="0 0 11 8"><path d="M0 2.6 H2.2 L5.2 0 V8 L2.2 5.4 H0 Z" fill="#ccd1de"/><path d="M6.8 2.2 Q8 4 6.8 5.8 M8.6 1 Q10.4 4 8.6 7" stroke="#ccd1de" stroke-width="0.9" fill="none"/></svg><svg preserveAspectRatio="none" style="left:77.6px;top:246.4px" width="8" height="8" viewBox="0 0 8 8"><g fill="#e4e7f0"><rect x="0" y="0" width="1" height="1"/><rect x="0" y="2" width="1" height="1"/><rect x="0" y="4" width="1" height="1"/><rect x="0" y="6" width="1" height="1"/><rect x="1" y="1" width="1" height="1"/><rect x="1" y="3" width="1" height="1"/><rect x="1" y="5" width="1" height="1"/><rect x="1" y="7" width="1" height="1"/><rect x="2" y="0" width="1" height="1"/><rect x="2" y="2" width="1" height="1"/><rect x="2" y="4" width="1" height="1"/><rect x="2" y="6" width="1" height="1"/><rect x="3" y="1" width="1" height="1"/><rect x="3" y="3" width="1" height="1"/><rect x="3" y="5" width="1" height="1"/><rect x="3" y="7" width="1" height="1"/><rect x="4" y="0" width="1" height="1"/><rect x="4" y="2" width="1" height="1"/><rect x="4" y="4" width="1" height="1"/><rect x="4" y="6" width="1" height="1"/><rect x="5" y="1" width="1" height="1"/><rect x="5" y="3" width="1" height="1"/><rect x="5" y="5" width="1" height="1"/><rect x="5" y="7" width="1" height="1"/><rect x="6" y="0" width="1" height="1"/><rect x="6" y="2" width="1" height="1"/><rect x="6" y="4" width="1" height="1"/><rect x="6" y="6" width="1" height="1"/><rect x="7" y="1" width="1" height="1"/><rect x="7" y="3" width="1" height="1"/><rect x="7" y="5" width="1" height="1"/><rect x="7" y="7" width="1" height="1"/></g></svg><div class="t" style="left:32px;top:235.7px;font-size:7.8px;color:#b0b7ca;">Video</div><div class="a" style="left:3px;top:263.6px;width:95px;height:33.6px;background:#232c47;"></div><div class="a" style="left:23px;top:263.6px;width:1px;height:33.6px;background:#1d2540;"></div><div class="a" style="left:98px;top:263.6px;width:536px;height:33.6px;background:#151a28;"></div><div class="a" style="left:3px;top:297.20000000000005px;width:95px;height:1px;background:#1a2036;"></div><div class="a" style="left:98px;top:297.20000000000005px;width:536px;height:1px;background:#1f263b;"></div><svg preserveAspectRatio="none" style="left:6.4px;top:277.6px" width="11.8" height="7.2" viewBox="0 0 13 9"><rect x="0" y="0.6" width="9" height="7.8" rx="0.8" fill="#ccd1de"/><path d="M9.6 3 L12.6 0.8 V8.2 L9.6 6 Z" fill="#ccd1de"/></svg><div class="t" style="left:8.8px;top:278.40000000000003px;font-size:5.6px;color:#232c47;font-weight:bold">1</div><svg preserveAspectRatio="none" style="left:35.2px;top:281.20000000000005px" width="7.6" height="7.6" viewBox="0 0 8 8"><path d="M1.8 5.9 L5.8 1.9" stroke="#3b4a72" stroke-width="3.4" stroke-linecap="round"/><path d="M1.8 5.9 L5.8 1.9" stroke="#232c47" stroke-width="1.5" stroke-linecap="round"/><path d="M2.8 4.9 L4.8 2.9" stroke="#3b4a72" stroke-width="0.8"/></svg><svg preserveAspectRatio="none" style="left:56px;top:281.8px" width="10" height="6.4" viewBox="0 0 11 8"><path d="M0 2.6 H2.2 L5.2 0 V8 L2.2 5.4 H0 Z" fill="#ccd1de"/><path d="M6.8 2.2 Q8 4 6.8 5.8 M8.6 1 Q10.4 4 8.6 7" stroke="#ccd1de" stroke-width="0.9" fill="none"/></svg><svg preserveAspectRatio="none" style="left:77.6px;top:281.0px" width="8" height="8" viewBox="0 0 8 8"><g fill="#e4e7f0"><rect x="0" y="0" width="1" height="1"/><rect x="0" y="2" width="1" height="1"/><rect x="0" y="4" width="1" height="1"/><rect x="0" y="6" width="1" height="1"/><rect x="1" y="1" width="1" height="1"/><rect x="1" y="3" width="1" height="1"/><rect x="1" y="5" width="1" height="1"/><rect x="1" y="7" width="1" height="1"/><rect x="2" y="0" width="1" height="1"/><rect x="2" y="2" width="1" height="1"/><rect x="2" y="4" width="1" height="1"/><rect x="2" y="6" width="1" height="1"/><rect x="3" y="1" width="1" height="1"/><rect x="3" y="3" width="1" height="1"/><rect x="3" y="5" width="1" height="1"/><rect x="3" y="7" width="1" height="1"/><rect x="4" y="0" width="1" height="1"/><rect x="4" y="2" width="1" height="1"/><rect x="4" y="4" width="1" height="1"/><rect x="4" y="6" width="1" height="1"/><rect x="5" y="1" width="1" height="1"/><rect x="5" y="3" width="1" height="1"/><rect x="5" y="5" width="1" height="1"/><rect x="5" y="7" width="1" height="1"/><rect x="6" y="0" width="1" height="1"/><rect x="6" y="2" width="1" height="1"/><rect x="6" y="4" width="1" height="1"/><rect x="6" y="6" width="1" height="1"/><rect x="7" y="1" width="1" height="1"/><rect x="7" y="3" width="1" height="1"/><rect x="7" y="5" width="1" height="1"/><rect x="7" y="7" width="1" height="1"/></g></svg><div class="t" style="left:32px;top:270.30000000000007px;font-size:7.8px;color:#b0b7ca;">Overlay1</div><div class="a" style="left:3px;top:298.2px;width:95px;height:33.6px;background:#232c47;"></div><div class="a" style="left:23px;top:298.2px;width:1px;height:33.6px;background:#1d2540;"></div><div class="a" style="left:98px;top:298.2px;width:536px;height:33.6px;background:#151a28;"></div><div class="a" style="left:3px;top:331.8px;width:95px;height:1px;background:#1a2036;"></div><div class="a" style="left:98px;top:331.8px;width:536px;height:1px;background:#1f263b;"></div><svg preserveAspectRatio="none" style="left:6.4px;top:312.2px" width="11.8" height="7.2" viewBox="0 0 13 9"><rect x="0" y="0.6" width="9" height="7.8" rx="0.8" fill="#ccd1de"/><path d="M9.6 3 L12.6 0.8 V8.2 L9.6 6 Z" fill="#ccd1de"/></svg><div class="t" style="left:8.8px;top:313.0px;font-size:5.6px;color:#232c47;font-weight:bold">2</div><svg preserveAspectRatio="none" style="left:35.2px;top:315.8px" width="7.6" height="7.6" viewBox="0 0 8 8"><path d="M1.8 5.9 L5.8 1.9" stroke="#3b4a72" stroke-width="3.4" stroke-linecap="round"/><path d="M1.8 5.9 L5.8 1.9" stroke="#232c47" stroke-width="1.5" stroke-linecap="round"/><path d="M2.8 4.9 L4.8 2.9" stroke="#3b4a72" stroke-width="0.8"/></svg><svg preserveAspectRatio="none" style="left:56px;top:316.4px" width="10" height="6.4" viewBox="0 0 11 8"><path d="M0 2.6 H2.2 L5.2 0 V8 L2.2 5.4 H0 Z" fill="#ccd1de"/><path d="M6.8 2.2 Q8 4 6.8 5.8 M8.6 1 Q10.4 4 8.6 7" stroke="#ccd1de" stroke-width="0.9" fill="none"/></svg><svg preserveAspectRatio="none" style="left:77.6px;top:315.59999999999997px" width="8" height="8" viewBox="0 0 8 8"><g fill="#e4e7f0"><rect x="0" y="0" width="1" height="1"/><rect x="0" y="2" width="1" height="1"/><rect x="0" y="4" width="1" height="1"/><rect x="0" y="6" width="1" height="1"/><rect x="1" y="1" width="1" height="1"/><rect x="1" y="3" width="1" height="1"/><rect x="1" y="5" width="1" height="1"/><rect x="1" y="7" width="1" height="1"/><rect x="2" y="0" width="1" height="1"/><rect x="2" y="2" width="1" height="1"/><rect x="2" y="4" width="1" height="1"/><rect x="2" y="6" width="1" height="1"/><rect x="3" y="1" width="1" height="1"/><rect x="3" y="3" width="1" height="1"/><rect x="3" y="5" width="1" height="1"/><rect x="3" y="7" width="1" height="1"/><rect x="4" y="0" width="1" height="1"/><rect x="4" y="2" width="1" height="1"/><rect x="4" y="4" width="1" height="1"/><rect x="4" y="6" width="1" height="1"/><rect x="5" y="1" width="1" height="1"/><rect x="5" y="3" width="1" height="1"/><rect x="5" y="5" width="1" height="1"/><rect x="5" y="7" width="1" height="1"/><rect x="6" y="0" width="1" height="1"/><rect x="6" y="2" width="1" height="1"/><rect x="6" y="4" width="1" height="1"/><rect x="6" y="6" width="1" height="1"/><rect x="7" y="1" width="1" height="1"/><rect x="7" y="3" width="1" height="1"/><rect x="7" y="5" width="1" height="1"/><rect x="7" y="7" width="1" height="1"/></g></svg><div class="t" style="left:32px;top:304.90000000000003px;font-size:7.8px;color:#b0b7ca;">Overlay2</div><div class="a" style="left:3px;top:332.8px;width:95px;height:33.6px;background:#232c47;"></div><div class="a" style="left:23px;top:332.8px;width:1px;height:33.6px;background:#1d2540;"></div><div class="a" style="left:98px;top:332.8px;width:536px;height:33.6px;background:#151a28;"></div><div class="a" style="left:3px;top:366.40000000000003px;width:95px;height:1px;background:#1a2036;"></div><div class="a" style="left:98px;top:366.40000000000003px;width:536px;height:1px;background:#1f263b;"></div><svg preserveAspectRatio="none" style="left:6.4px;top:346.8px" width="11.8" height="7.2" viewBox="0 0 13 9"><rect x="0" y="0.6" width="9" height="7.8" rx="0.8" fill="#ccd1de"/><path d="M9.6 3 L12.6 0.8 V8.2 L9.6 6 Z" fill="#ccd1de"/></svg><div class="t" style="left:8.8px;top:347.6px;font-size:5.6px;color:#232c47;font-weight:bold">3</div><svg preserveAspectRatio="none" style="left:35.2px;top:350.40000000000003px" width="7.6" height="7.6" viewBox="0 0 8 8"><path d="M1.8 5.9 L5.8 1.9" stroke="#3b4a72" stroke-width="3.4" stroke-linecap="round"/><path d="M1.8 5.9 L5.8 1.9" stroke="#232c47" stroke-width="1.5" stroke-linecap="round"/><path d="M2.8 4.9 L4.8 2.9" stroke="#3b4a72" stroke-width="0.8"/></svg><svg preserveAspectRatio="none" style="left:56px;top:351.0px" width="10" height="6.4" viewBox="0 0 11 8"><path d="M0 2.6 H2.2 L5.2 0 V8 L2.2 5.4 H0 Z" fill="#ccd1de"/><path d="M6.8 2.2 Q8 4 6.8 5.8 M8.6 1 Q10.4 4 8.6 7" stroke="#ccd1de" stroke-width="0.9" fill="none"/></svg><svg preserveAspectRatio="none" style="left:77.6px;top:350.2px" width="8" height="8" viewBox="0 0 8 8"><g fill="#e4e7f0"><rect x="0" y="0" width="1" height="1"/><rect x="0" y="2" width="1" height="1"/><rect x="0" y="4" width="1" height="1"/><rect x="0" y="6" width="1" height="1"/><rect x="1" y="1" width="1" height="1"/><rect x="1" y="3" width="1" height="1"/><rect x="1" y="5" width="1" height="1"/><rect x="1" y="7" width="1" height="1"/><rect x="2" y="0" width="1" height="1"/><rect x="2" y="2" width="1" height="1"/><rect x="2" y="4" width="1" height="1"/><rect x="2" y="6" width="1" height="1"/><rect x="3" y="1" width="1" height="1"/><rect x="3" y="3" width="1" height="1"/><rect x="3" y="5" width="1" height="1"/><rect x="3" y="7" width="1" height="1"/><rect x="4" y="0" width="1" height="1"/><rect x="4" y="2" width="1" height="1"/><rect x="4" y="4" width="1" height="1"/><rect x="4" y="6" width="1" height="1"/><rect x="5" y="1" width="1" height="1"/><rect x="5" y="3" width="1" height="1"/><rect x="5" y="5" width="1" height="1"/><rect x="5" y="7" width="1" height="1"/><rect x="6" y="0" width="1" height="1"/><rect x="6" y="2" width="1" height="1"/><rect x="6" y="4" width="1" height="1"/><rect x="6" y="6" width="1" height="1"/><rect x="7" y="1" width="1" height="1"/><rect x="7" y="3" width="1" height="1"/><rect x="7" y="5" width="1" height="1"/><rect x="7" y="7" width="1" height="1"/></g></svg><div class="t" style="left:32px;top:339.50000000000006px;font-size:7.8px;color:#b0b7ca;">Overlay3</div><div class="a" style="left:3px;top:367.4px;width:95px;height:33.6px;background:#232c47;"></div><div class="a" style="left:23px;top:367.4px;width:1px;height:33.6px;background:#1d2540;"></div><div class="a" style="left:98px;top:367.4px;width:536px;height:33.6px;background:#151a28;"></div><div class="a" style="left:3px;top:401.0px;width:95px;height:1px;background:#1a2036;"></div><div class="a" style="left:98px;top:401.0px;width:536px;height:1px;background:#1f263b;"></div><svg preserveAspectRatio="none" style="left:6.4px;top:381.4px" width="11.8" height="7.2" viewBox="0 0 13 9"><rect x="0" y="0.6" width="9" height="7.8" rx="0.8" fill="#ccd1de"/><path d="M9.6 3 L12.6 0.8 V8.2 L9.6 6 Z" fill="#ccd1de"/></svg><div class="t" style="left:8.8px;top:382.2px;font-size:5.6px;color:#232c47;font-weight:bold">4</div><svg preserveAspectRatio="none" style="left:35.2px;top:385.0px" width="7.6" height="7.6" viewBox="0 0 8 8"><path d="M1.8 5.9 L5.8 1.9" stroke="#3b4a72" stroke-width="3.4" stroke-linecap="round"/><path d="M1.8 5.9 L5.8 1.9" stroke="#232c47" stroke-width="1.5" stroke-linecap="round"/><path d="M2.8 4.9 L4.8 2.9" stroke="#3b4a72" stroke-width="0.8"/></svg><svg preserveAspectRatio="none" style="left:56px;top:385.59999999999997px" width="10" height="6.4" viewBox="0 0 11 8"><path d="M0 2.6 H2.2 L5.2 0 V8 L2.2 5.4 H0 Z" fill="#ccd1de"/><path d="M6.8 2.2 Q8 4 6.8 5.8 M8.6 1 Q10.4 4 8.6 7" stroke="#ccd1de" stroke-width="0.9" fill="none"/></svg><svg preserveAspectRatio="none" style="left:77.6px;top:384.79999999999995px" width="8" height="8" viewBox="0 0 8 8"><g fill="#e4e7f0"><rect x="0" y="0" width="1" height="1"/><rect x="0" y="2" width="1" height="1"/><rect x="0" y="4" width="1" height="1"/><rect x="0" y="6" width="1" height="1"/><rect x="1" y="1" width="1" height="1"/><rect x="1" y="3" width="1" height="1"/><rect x="1" y="5" width="1" height="1"/><rect x="1" y="7" width="1" height="1"/><rect x="2" y="0" width="1" height="1"/><rect x="2" y="2" width="1" height="1"/><rect x="2" y="4" width="1" height="1"/><rect x="2" y="6" width="1" height="1"/><rect x="3" y="1" width="1" height="1"/><rect x="3" y="3" width="1" height="1"/><rect x="3" y="5" width="1" height="1"/><rect x="3" y="7" width="1" height="1"/><rect x="4" y="0" width="1" height="1"/><rect x="4" y="2" width="1" height="1"/><rect x="4" y="4" width="1" height="1"/><rect x="4" y="6" width="1" height="1"/><rect x="5" y="1" width="1" height="1"/><rect x="5" y="3" width="1" height="1"/><rect x="5" y="5" width="1" height="1"/><rect x="5" y="7" width="1" height="1"/><rect x="6" y="0" width="1" height="1"/><rect x="6" y="2" width="1" height="1"/><rect x="6" y="4" width="1" height="1"/><rect x="6" y="6" width="1" height="1"/><rect x="7" y="1" width="1" height="1"/><rect x="7" y="3" width="1" height="1"/><rect x="7" y="5" width="1" height="1"/><rect x="7" y="7" width="1" height="1"/></g></svg><div class="t" style="left:32px;top:374.1px;font-size:7.8px;color:#b0b7ca;">Overlay4</div><div class="a" style="left:3px;top:402.0px;width:95px;height:11px;background:#232c47;"></div><div class="a" style="left:23px;top:402.0px;width:1px;height:11px;background:#1d2540;"></div><div class="a" style="left:98px;top:402.0px;width:536px;height:11px;background:#151a28;"></div><div class="t" style="left:32px;top:408.70000000000005px;font-size:7.8px;color:#b0b7ca;">Overlay5</div><div class="a" style="left:100px;top:229px;width:175px;height:33px;background:#106b59;border-radius:2px;overflow:hidden"></div><div class="a" style="left:100px;top:229px;width:62px;height:33px;background:#eeebdf;border-radius:2px 0 0 2px"></div><div class="t" style="left:165.6px;top:241.9px;font-size:7.2px;color:#e3efec;">i.mp4</div><svg preserveAspectRatio="none" style="left:103.6px;top:246px" width="9" height="6" viewBox="0 0 9 6"><rect x="0" y="0" width="9" height="6" fill="#1a1608"/><path d="M1.2 2 H2.6 L4.4 0.8 V5.2 L2.6 4 H1.2 Z" fill="#f2b418"/><path d="M5.6 1.6 V4.4 M7 1 V5" stroke="#f2b418" stroke-width="0.8"/></svg><div class="a" style="left:276px;top:229px;width:175px;height:33px;background:#106b59;border-radius:2px;overflow:hidden"></div><div class="a" style="left:276px;top:229px;width:61px;height:33px;background:#eeebdf;border-radius:2px 0 0 2px"></div><div class="t" style="left:340.6px;top:241.9px;font-size:7.2px;color:#e3efec;">o.mp4</div><svg preserveAspectRatio="none" style="left:279.6px;top:246px" width="9" height="6" viewBox="0 0 9 6"><rect x="0" y="0" width="9" height="6" fill="#1a1608"/><path d="M1.2 2 H2.6 L4.4 0.8 V5.2 L2.6 4 H1.2 Z" fill="#f2b418"/><path d="M5.6 1.6 V4.4 M7 1 V5" stroke="#f2b418" stroke-width="0.8"/></svg><div class="a" style="left:452.3px;top:229px;width:129.7px;height:33px;background:#106b59;border-radius:2px;overflow:hidden"></div><div class="a" style="left:452.3px;top:229px;width:61.69999999999999px;height:33px;background:#eeebdf;border-radius:2px 0 0 2px"></div><div class="t" style="left:517.6px;top:241.9px;font-size:7.2px;color:#e3efec;">2.mp4</div><div class="a" style="left:489.6px;top:224px;width:1.3px;height:189px;background:#7f92c2;"></div><div class="a" style="left:489.6px;top:229px;width:1.3px;height:33px;background:#7a6a52;"></div><svg preserveAspectRatio="none" style="left:486.8px;top:210.8px" width="7.6" height="7.8" viewBox="0 0 8 8.2"><path d="M1.2 0.3 H6.8 Q7.7 0.3 7.7 1.2 V4.6 L4 7.9 L0.3 4.6 V1.2 Q0.3 0.3 1.2 0.3 Z" fill="#f5efdc" stroke="#d8c9a0" stroke-width="0.5"/></svg><div class="a" style="left:634px;top:209px;width:14px;height:205px;background:#222a42;"></div><div class="a" style="left:639px;top:240px;width:4px;height:66px;background:#2f3b5e;border-radius:2px"></div><svg preserveAspectRatio="none" style="left:638px;top:230px" width="6" height="4" viewBox="0 0 6 4"><path d="M3 0 L6 4 H0 Z" fill="#dfe3ec"/></svg><svg preserveAspectRatio="none" style="left:638px;top:408px" width="6" height="4" viewBox="0 0 6 4"><path d="M3 4 L6 0 H0 Z" fill="#dfe3ec"/></svg><div class="a" style="left:2px;top:413px;width:646px;height:14px;background:#232c48;"></div><div class="a" style="left:99px;top:418px;width:281px;height:4px;background:#2d3859;border-radius:2px"></div><div class="a" style="left:54px;top:418px;width:13px;height:6px;background:#3a4769;"></div><div class="a" style="left:58px;top:420px;width:5px;height:1px;background:#e8ebf2;"></div><div class="a" style="left:56px;top:422px;width:9px;height:1px;background:#e8ebf2;"></div><svg preserveAspectRatio="none" style="left:75px;top:417.5px" width="4" height="6" viewBox="0 0 4 6"><path d="M4 0 L0 3 L4 6 Z" fill="#e8ebf2"/></svg><svg preserveAspectRatio="none" style="left:86px;top:417.5px" width="4" height="6" viewBox="0 0 4 6"><path d="M0 0 L4 3 L0 6 Z" fill="#e8ebf2"/></svg><div class="a" style="left:0px;top:427px;width:650px;height:3px;background:#000;"></div><div class="a" style="left:648px;top:2px;width:2px;height:428px;background:#000;"></div><div class="a" style="left:0px;top:10px;width:2px;height:420px;background:#000;"></div></body></html>
